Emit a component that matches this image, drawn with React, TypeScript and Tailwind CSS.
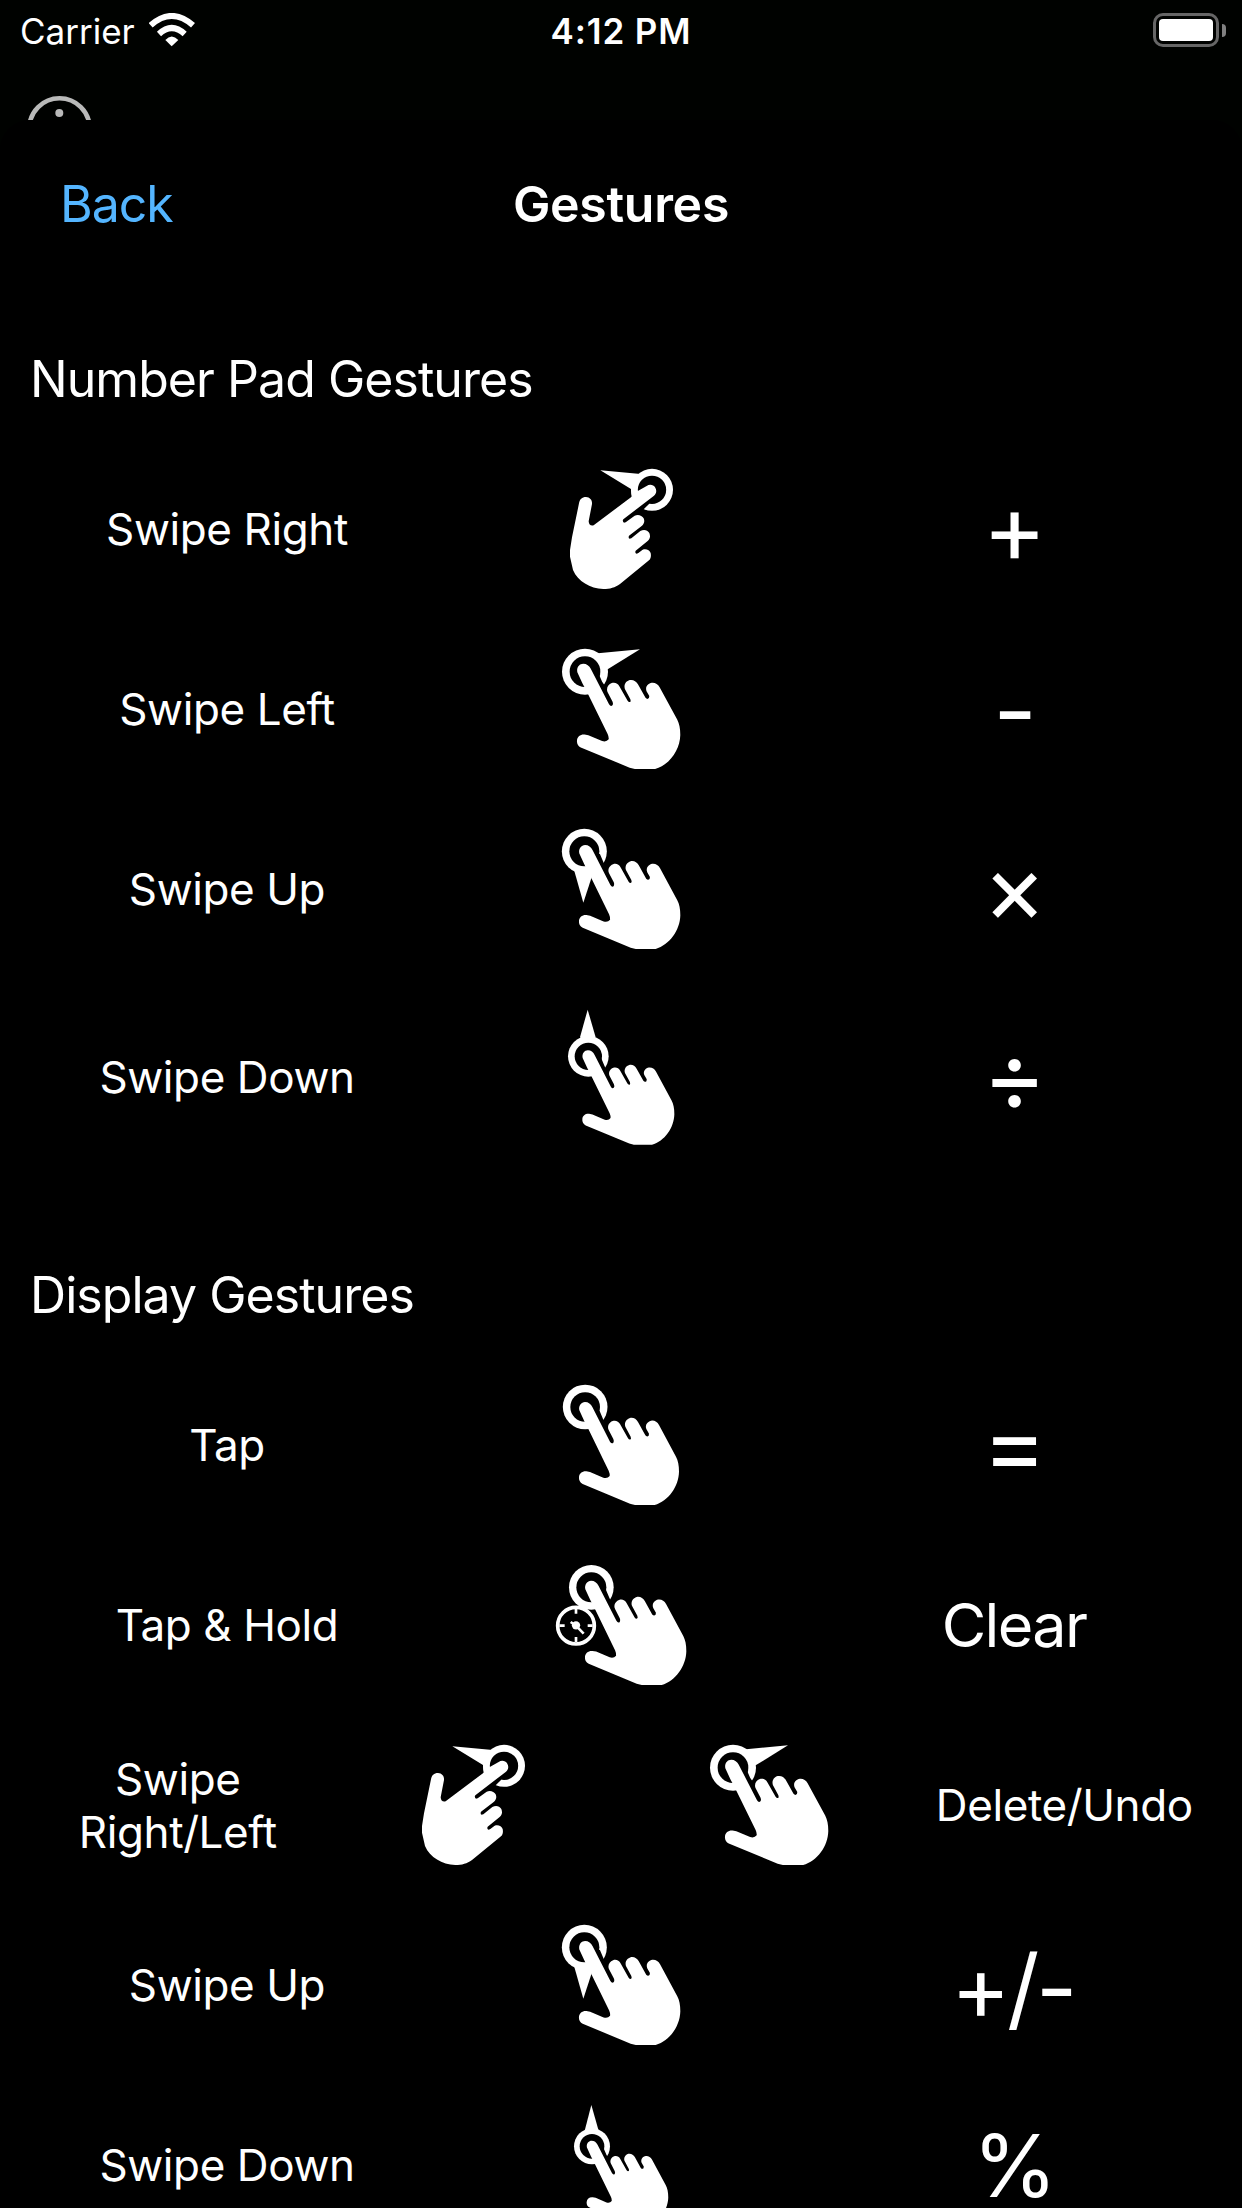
import type { ReactNode } from "react";

const HAND =
  "M88 106C85 92 94 81 105 81C115 81 123 87 127 96L180 200Q185 208 190 203Q193 199 190 192L176 165C171 153 177 142 188 138C197 135 206 139 210 147L234 190Q239 197 243 191L242 185L226 155C222 142 230 132 240 129C250 127 259 132 264 141L286 181Q291 187 296 182L297 176L289 162C284 148 294 139 304 137C314 136 322 141 327 150L378 245C384 257 387 270 387 290C386 335 355 378 314 390L255 390L240 386L98 327C90 323 86 315 87 306C88 295 97 288 109 289L120 291L160 308Q172 312 179 303Q180 296 176 287L114 160L103 139Z";

type HandProps = {
  view: string;
  transform?: string;
  ring: [number, number, number, number];
  arrow?: string;
  children?: ReactNode;
};

function Hand({ view, transform, ring, arrow, children }: HandProps) {
  const [cx, cy, outer, inner] = ring;
  return (
    <svg className="h-[150px] w-[150px] shrink-0" viewBox={view} fill="white">
      {arrow && <polygon points={arrow} />}
      <circle cx={cx} cy={cy} r={outer} />
      <circle cx={cx} cy={cy} r={inner} fill="black" />
      <g transform={transform}>
        <polygon points="105,100 149,108 160,134 168,146 176,165 190,200" fill="black" />
        <path d={HAND} />
      </g>
      {children}
    </svg>
  );
}

const Tap = () => <Hand view="-12 -12 450 450" ring={[105.5, 96, 67, 44.5]} />;

const SwipeLeft = () => (
  <Hand
    view="-12 0 450 450"
    transform="matrix(1.033 0 0 1.0227 -8.9 3.2)"
    ring={[105, 110, 69, 46]}
    arrow="144,55 270,43 173,103 140,100"
  />
);

const SwipeUp = () => (
  <Hand
    view="-12 0 450 450"
    transform="matrix(1.0134 0 0 1.0097 -1.2 8.2)"
    ring={[103, 109, 67.5, 45]}
    arrow="73,168 100,263 124,190 124,160"
  />
);

const SwipeDown = () => (
  <Hand
    view="-12 7 450 450"
    transform="matrix(0.92 0 0 0.916 17 74.8)"
    ring={[115, 167, 61, 41]}
    arrow="113,27 90,110 115,130 137,110"
  />
);

const SwipeDownSmall = () => (
  <Hand
    view="-12 3 450 450"
    transform="matrix(0.816 0 0 0.816 39 86)"
    ring={[126, 169, 54, 37]}
    arrow="124,45 104,122 124,130 146,122"
  />
);

const TapHold = () => (
  <Hand view="18 -12 450 450" transform="matrix(1.0134 0 0 1.013 46.8 -5)" ring={[154, 97, 67, 45]}>
    <circle cx="108" cy="212" r="55" fill="black" stroke="white" strokeWidth="11" />
    <path
      d="M108 162V176M108 262V246M58 212H74M158 212H143M92 201L108 212L131 236"
      fill="none"
      stroke="white"
      strokeWidth="8"
    />
    <circle cx="108" cy="211" r="12.5" />
  </Hand>
);

const SwipeRight = () => (
  <svg className="h-[150px] w-[150px] shrink-0" viewBox="-12 15 450 450" fill="white">
    <polygon points="151,61 272,72 290,100 245,142 243,117" />
    <circle cx="306" cy="119.500" r="63" />
    <circle cx="306" cy="119.500" r="42.500" fill="black" />
    <polygon points="304,125 297,162 281,178 255,196 219,217" fill="black" />
    <path d="M87 160C89 148 96 141 108 141C120 142 127 150 126 162L116 214Q117 229 131 226L245 140L262 124L290 108C298 102 310 103 316 113C321 122 319 130 312 137L220 208Q216 214 222 218L227 217L254 197C264 192 276 196 281 205C285 214 282 222 276 227L237 257Q234 264 239 266L244 265L271 243C281 237 292 239 298 249C302 259 300 267 293 273L257 302Q254 308 259 311L264 310L278 299C288 295 299 300 302 309C304 319 302 326 297 331L210 402C195 413 180 417 160 417C120 415 84 395 69 360L60 320L60 300L66 262Z" />
  </svg>
);

const LABEL = "pb-[1px] text-center text-[44px] leading-[53px] tracking-[-0.4px]";
const SYMBOL = "pr-[1px] pb-[4px] text-center text-[97px] leading-[100px]";

function Row({ label, icon, children, tall }: { label: string; icon: ReactNode; children: ReactNode; tall?: boolean }) {
  return (
    <div className={tall ? "grid h-[195px] grid-cols-3 items-center" : "grid h-[180px] grid-cols-3 items-center"}>
      <div className={LABEL}>{label}</div>
      <div className="flex justify-center">{icon}</div>
      {children}
    </div>
  );
}

export default function App() {
  return (
    <div className="flex h-[2208px] w-[1242px] flex-col overflow-hidden bg-[#000200] font-[Inter,sans-serif] text-white">
      <header className="grid h-[60px] shrink-0 grid-cols-3 items-center pr-[16px] pl-[20px]">
        <div className="flex items-center gap-[14px]">
          <span className="pt-[2px] text-[35px] leading-[42px]">Carrier</span>
          <svg className="h-[34px] w-[46px]" viewBox="448 38 138 102" fill="none" stroke="white">
            <path d="M453 75Q516 19 580 75" strokeWidth="18" />
            <path d="M478 101Q516 65 555 101" strokeWidth="18" />
            <path d="M497 119Q516 98 536 119L516 138Z" fill="white" stroke="none" />
          </svg>
        </div>
        <div className="pt-[2px] pr-[4px] text-center text-[35px] leading-[42px] font-semibold tracking-[0.9px]">4:12 PM</div>
        <div className="flex items-center justify-end gap-[3px]">
          <div className="h-[34px] w-[66px] rounded-[10px] border-[3px] border-[#666] p-[3px]">
            <div className="h-full rounded-[4px] bg-white" />
          </div>
          <div className="h-[13px] w-[4px] rounded-r-full bg-[#808080]" />
        </div>
      </header>
      <div className="h-[60px] shrink-0 overflow-hidden pt-[36px] pl-[27px]">
        <svg className="h-[66px] w-[66px]" viewBox="0 0 66 66">
          <circle cx="32.500" cy="32.500" r="30.200" fill="none" stroke="#b9bab9" strokeWidth="4.600" />
          <circle cx="32.300" cy="17" r="4" fill="#b9bab9" />
        </svg>
      </div>
      <main className="flex min-h-0 grow flex-col overflow-hidden rounded-t-[30px] bg-black px-[30px]">
        <nav className="grid h-[170px] shrink-0 grid-cols-3 items-center pb-[2px]">
          <a className="pl-[30px] text-[50px] leading-[60px] tracking-[-1px] text-[#54b5ff]">Back</a>
          <h1 className="text-center text-[50px] leading-[60px] font-semibold tracking-[-0.3px]">Gestures</h1>
        </nav>
        <section className="shrink-0">
          <h2 className="flex h-[150px] items-end pb-[31px] text-[50px] leading-[60px] tracking-[-0.95px]">Number Pad Gestures</h2>
          <Row label="Swipe Right" icon={<SwipeRight />}><div className={SYMBOL}>+</div></Row>
          <Row label="Swipe Left" icon={<SwipeLeft />}><div className="pt-[2px] text-center text-[95px] leading-[100px]">-</div></Row>
          <Row label="Swipe Up" icon={<SwipeUp />}><div className={SYMBOL}>×</div></Row>
          <Row label="Swipe Down" icon={<SwipeDown />} tall><div className={SYMBOL}>÷</div></Row>
        </section>
        <section className="shrink-0">
          <h2 className="flex h-[181px] items-end pb-[31px] text-[50px] leading-[60px] tracking-[-0.95px]">Display Gestures</h2>
          <Row label="Tap" icon={<Tap />}><div className={SYMBOL}>=</div></Row>
          <Row label="Tap & Hold" icon={<TapHold />}><div className="pr-[2px] pb-[3px] text-center text-[61px] leading-[72px] tracking-[-1.6px]">Clear</div></Row>
          <div className="grid h-[180px] grid-cols-4 items-center">
            <div className={LABEL}>Swipe<br />Right/Left</div>
            <div className="flex justify-center"><SwipeRight /></div>
            <div className="flex justify-center"><SwipeLeft /></div>
            <div className={LABEL}>Delete/Undo</div>
          </div>
          <Row label="Swipe Up" icon={<SwipeUp />}><div className="pt-[4px] pr-[5px] text-center text-[90px] leading-[100px] tracking-[-3.5px]">+/-</div></Row>
          <Row label="Swipe Down" icon={<SwipeDownSmall />}><div className="text-center text-[86px] leading-[80px]">%</div></Row>
        </section>
      </main>
    </div>
  );
}
